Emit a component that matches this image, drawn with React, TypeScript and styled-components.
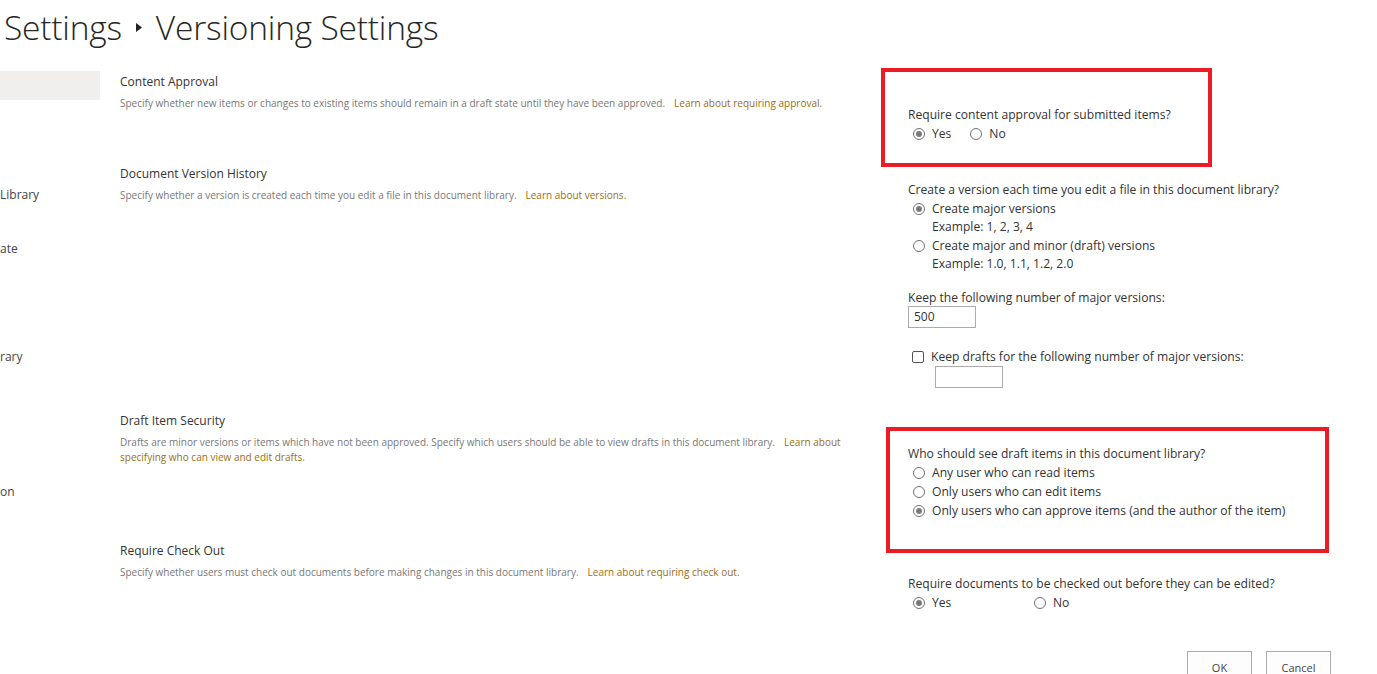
import React from 'react'
import styled, { createGlobalStyle } from 'styled-components'

const GlobalStyle = createGlobalStyle`
    html, body {
        margin: 0;
        padding: 0;
        background: #fff;
        overflow: hidden;
    }
    body {
        font-family: "Open Sans", "Noto Sans", sans-serif;
        color: #333;
    }
`

const Page = styled.div`
    width: 1377px;
    height: 674px;
    overflow: hidden;
`

const TitleRow = styled.div`
    display: flex;
    align-items: center;
    height: 55px;
    padding-left: 4px;
    gap: 14px;
    font-weight: 300;
    font-size: 33.5px;
    color: #262626;
    letter-spacing: -0.2px;
`

const Crumb = styled.span`
    line-height: 55px;
`

const Body = styled.div`
    display: flex;
    padding-top: 16px;
`

const Nav = styled.div`
    width: 100px;
    flex: none;
    display: flex;
    flex-direction: column;
`

const NavBlank = styled.div`
    height: 29px;
    background: #f0efee;
`

const NavItem = styled.div<{ $top: number }>`
    margin-top: ${(p) => p.$top}px;
    font-size: 12px;
    line-height: 18px;
    color: #444;
`

const Sections = styled.div`
    flex: 1;
    display: flex;
    flex-direction: column;
`

const Section = styled.div`
    display: grid;
    grid-template-columns: 808px 1fr;
`

const Describe = styled.div`
    padding: 2px 0 0 20px;
    max-width: 742px;
`

const Heading = styled.div`
    font-size: 12px;
    line-height: 18px;
    color: #333;
`

const Desc = styled.div`
    margin-top: 5px;
    font-size: 10px;
    line-height: 15px;
    color: #777;
`

const Learn = styled.a`
    color: #9a6e12;
    margin-left: 9px;
    text-decoration: none;
`

const Controls = styled.div<{ $top: number; $bottom?: number }>`
    position: relative;
    padding: ${(p) => p.$top}px 0 ${(p) => p.$bottom ?? 20}px 0;
    font-size: 12.1px;
    line-height: 19px;
    color: #333;
`

const Highlight = styled.div<{ $x: number; $y: number; $w: number; $h: number }>`
    position: absolute;
    left: ${(p) => p.$x}px;
    top: ${(p) => p.$y}px;
    width: ${(p) => p.$w}px;
    height: ${(p) => p.$h}px;
    border: 4px solid #ec1c24;
    box-sizing: border-box;
    pointer-events: none;
`

const Question = styled.div``

const OptionRow = styled.div<{ $gap?: number }>`
    display: flex;
    align-items: center;
    padding-left: 5px;
    gap: ${(p) => p.$gap ?? 19}px;
`

const Option = styled.label<{ $width?: number }>`
    display: flex;
    align-items: center;
    gap: 7px;
    width: ${(p) => (p.$width ? `${p.$width}px` : 'auto')};
`

const Radio = styled.span<{ $on?: boolean }>`
    width: 12px;
    height: 12px;
    flex: none;
    border-radius: 50%;
    border: 1px solid #707070;
    box-sizing: border-box;
    display: flex;
    align-items: center;
    justify-content: center;
    background: #fff;

    &::after {
        content: '';
        width: 6px;
        height: 6px;
        border-radius: 50%;
        background: ${(p) => (p.$on ? '#7a7a7a' : 'transparent')};
    }
`

const Example = styled.div`
    padding-left: 24px;
    line-height: 18px;
`

const FieldLabel = styled.div`
    margin-top: 16px;
    line-height: 17px;
`

const NumberBox = styled.div<{ $indent?: number }>`
    margin-left: ${(p) => p.$indent ?? 0}px;
    width: 68px;
    height: 22px;
    box-sizing: border-box;
    border: 1px solid #ababab;
    padding-left: 5px;
    font-size: 12px;
    line-height: 20px;
`

const CheckRow = styled.label`
    margin-top: 19px;
    display: flex;
    align-items: center;
    gap: 7px;
    padding-left: 4px;
`

const Check = styled.span`
    width: 12px;
    height: 12px;
    border: 1px solid #555;
    border-radius: 2px;
    box-sizing: border-box;
    background: #fff;
`

const Buttons = styled.div`
    width: 423px;
    display: flex;
    justify-content: flex-end;
    gap: 14px;
    margin-top: 39px;
`

const Button = styled.button`
    width: 65px;
    height: 30px;
    background: #fdfdfd;
    border: 1px solid #ababab;
    font-family: inherit;
    font-size: 11px;
    color: #444;
    padding-top: 4px;
`

function Separator() {
    return (
        <svg width="6" height="9" viewBox="0 0 6 9">
            <path d="M0 0 L6 4.5 L0 9 Z" fill="#222" />
        </svg>
    )
}

export default function App() {
    return (
        <Page>
            <GlobalStyle />
            <TitleRow>
                <Crumb>Settings</Crumb>
                <Separator />
                <Crumb>Versioning Settings</Crumb>
            </TitleRow>
            <Body>
                <Nav>
                    <NavBlank />
                    <NavItem $top={86}>Library</NavItem>
                    <NavItem $top={36}>ate</NavItem>
                    <NavItem $top={90}>rary</NavItem>
                    <NavItem $top={117}>on</NavItem>
                </Nav>
                <Sections>
                    <Section>
                        <Describe>
                            <Heading>Content Approval</Heading>
                            <Desc>
                                Specify whether new items or changes to existing items should remain in a draft state
                                until they have been approved.
                                <Learn href="#">Learn about requiring approval.</Learn>
                            </Desc>
                        </Describe>
                        <Controls $top={34}>
                            <Highlight $x={-27} $y={-3} $w={331} $h={99} />
                            <Question>Require content approval for submitted items?</Question>
                            <OptionRow>
                                <Option>
                                    <Radio $on />
                                    Yes
                                </Option>
                                <Option>
                                    <Radio />
                                    No
                                </Option>
                            </OptionRow>
                        </Controls>
                    </Section>

                    <Section>
                        <Describe>
                            <Heading>Document Version History</Heading>
                            <Desc>
                                Specify whether a version is created each time you edit a file in this document library.
                                <Learn href="#">Learn about versions.</Learn>
                            </Desc>
                        </Describe>
                        <Controls $top={17} $bottom={22}>
                            <Question>Create a version each time you edit a file in this document library?</Question>
                            <OptionRow>
                                <Option>
                                    <Radio $on />
                                    Create major versions
                                </Option>
                            </OptionRow>
                            <Example>Example: 1, 2, 3, 4</Example>
                            <OptionRow>
                                <Option>
                                    <Radio />
                                    Create major and minor (draft) versions
                                </Option>
                            </OptionRow>
                            <Example>Example: 1.0, 1.1, 1.2, 2.0</Example>
                            <FieldLabel>Keep the following number of major versions:</FieldLabel>
                            <NumberBox>500</NumberBox>
                            <CheckRow>
                                <Check />
                                Keep drafts for the following number of major versions:
                            </CheckRow>
                            <NumberBox $indent={27} />
                        </Controls>
                    </Section>

                    <Section>
                        <Describe>
                            <Heading>Draft Item Security</Heading>
                            <Desc>
                                Drafts are minor versions or items which have not been approved. Specify which users
                                should be able to view drafts in this document library.
                                <Learn href="#">Learn about specifying who can view and edit drafts.</Learn>
                            </Desc>
                        </Describe>
                        <Controls $top={34}>
                            <Highlight $x={-22} $y={17} $w={443} $h={126} />
                            <Question>Who should see draft items in this document library?</Question>
                            <OptionRow>
                                <Option>
                                    <Radio />
                                    Any user who can read items
                                </Option>
                            </OptionRow>
                            <OptionRow>
                                <Option>
                                    <Radio />
                                    Only users who can edit items
                                </Option>
                            </OptionRow>
                            <OptionRow>
                                <Option>
                                    <Radio $on />
                                    Only users who can approve items (and the author of the item)
                                </Option>
                            </OptionRow>
                        </Controls>
                    </Section>

                    <Section>
                        <Describe>
                            <Heading>Require Check Out</Heading>
                            <Desc>
                                Specify whether users must check out documents before making changes in this document
                                library.
                                <Learn href="#">Learn about requiring check out.</Learn>
                            </Desc>
                        </Describe>
                        <Controls $top={34}>
                            <Question>Require documents to be checked out before they can be edited?</Question>
                            <OptionRow $gap={0}>
                                <Option $width={121}>
                                    <Radio $on />
                                    Yes
                                </Option>
                                <Option>
                                    <Radio />
                                    No
                                </Option>
                            </OptionRow>
                            <Buttons>
                                <Button>OK</Button>
                                <Button>Cancel</Button>
                            </Buttons>
                        </Controls>
                    </Section>
                </Sections>
            </Body>
        </Page>
    )
}
